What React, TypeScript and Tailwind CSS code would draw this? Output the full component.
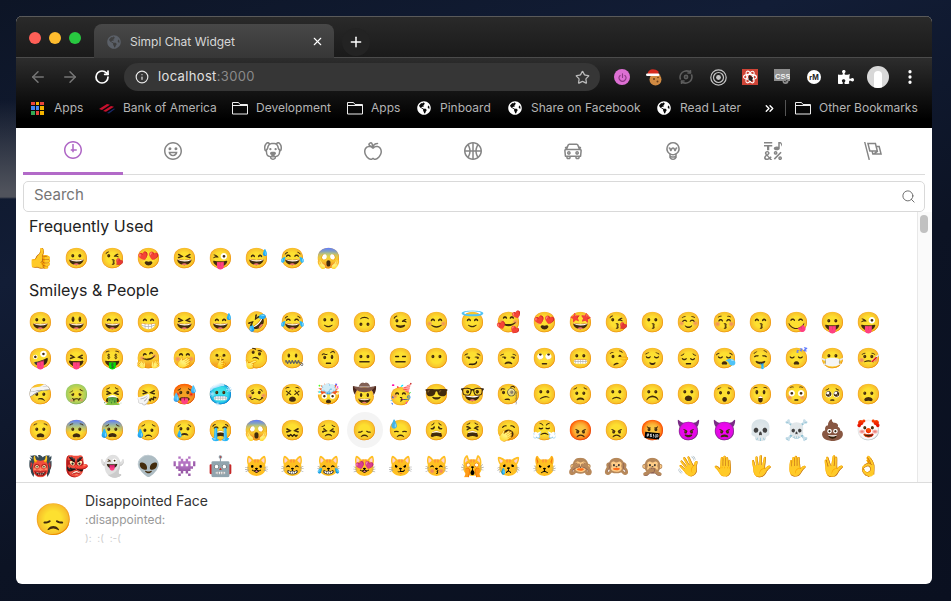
import { ArrowLeft, ArrowRight, Info, Star, Search, X, Plus, RotateCw, EllipsisVertical, ChevronsRight, Power } from "lucide-react";
import { FaGlobeAmericas, FaPuzzlePiece } from "react-icons/fa";

const F = "[font-family:Inter,'Noto_Sans',sans-serif]";

const face = "M12 0C5.373 0 0 5.373 0 12s5.373 12 12 12 12-5.373 12-12S18.627 0 12 0m0 22C6.486 22 2 17.514 2 12S6.486 2 12 2s10 4.486 10 10-4.486 10-10 10";
const tabIcons: string[] = [
  "M13 4h-2l-.001 7H9v2h2v2h2v-2h4v-2h-4z " + face,
  face + " M8 7a2 2 0 1 0-.001 3.999A2 2 0 0 0 8 7M16 7a2 2 0 1 0-.001 3.999A2 2 0 0 0 16 7M15.232 15c-.693 1.195-1.87 2-3.349 2-1.477 0-2.655-.805-3.347-2H15m3-2H6a6 6 0 1 0 12 0",
  "M15.5 8a1.5 1.5 0 1 0 .001 3.001A1.5 1.5 0 0 0 15.5 8M8.5 8a1.5 1.5 0 1 0 .001 3.001A1.5 1.5 0 0 0 8.5 8 M18.933 0h-.027c-.97 0-2.138.787-3.018 1.497-1.274-.374-2.612-.51-3.887-.51-1.285 0-2.616.133-3.874.517C7.245.79 6.069 0 5.093 0h-.027C3.352 0 .07 2.67.002 7.026c-.039 2.479.276 4.238 1.04 5.013.254.258.882.677 1.295.882.191 3.177.922 5.238 2.536 6.38.897.637 2.187.949 3.2 1.102C8.04 20.6 8 20.795 8 21c0 1.773 2.35 3 4 3 1.648 0 4-1.227 4-3 0-.201-.038-.393-.072-.586 2.573-.385 5.435-1.877 5.925-7.587.396-.22.887-.568 1.104-.788.763-.774 1.079-2.534 1.04-5.013C23.929 2.67 20.646 0 18.933 0M3.223 9.135c-.237.281-.837 1.155-.884 1.238-.15-.41-.368-1.349-.337-3.291.051-3.281 2.478-4.972 3.091-5.031.256.015.731.27 1.265.646-1.11 1.171-2.275 2.915-2.352 5.125-.133.546-.398.858-.783 1.313M12 22c-.901 0-1.954-.693-2-1 0-.654.475-1.236 1-1.602V20a1 1 0 1 0 2 0v-.602c.524.365 1 .947 1 1.602-.046.307-1.099 1-2 1m3-3.48v.02a4.752 4.752 0 0 0-1.262-1.02c1.092-.516 2.239-1.334 2.239-2.217 0-1.842-1.781-2.195-3.977-2.195-2.196 0-3.978.354-3.978 2.195 0 .883 1.148 1.701 2.238 2.217A4.8 4.8 0 0 0 9 18.539v-.025c-1-.076-2.182-.281-2.973-.842-1.301-.92-1.838-3.045-1.853-6.478l.023-.041c.496-.826 1.49-1.45 1.804-3.102 0-2.047 1.357-3.631 2.362-4.522C9.37 3.178 10.555 3 11.948 3c1.447 0 2.685.192 3.733.57 1 .9 2.316 2.465 2.316 4.48.313 1.651 1.307 2.275 1.803 3.102.035.058.068.117.102.178-.059 5.967-1.949 7.01-4.902 7.19m6.628-8.202c-.037-.065-.074-.13-.113-.195a7.587 7.587 0 0 0-.739-.987c-.385-.455-.648-.768-.782-1.313-.076-2.209-1.241-3.954-2.353-5.124.531-.376 1.004-.63 1.261-.647.636.071 3.044 1.764 3.096 5.031.027 1.81-.347 3.218-.37 3.235",
  "M17 4.978c-1.838 0-2.876.396-3.68.934.513-1.172 1.768-2.934 4.68-2.934a1 1 0 0 0 0-2c-2.921 0-4.629 1.365-5.547 2.512-.064.078-.119.162-.18.244C11.73 1.838 10.798.023 9.207.023 8.579.022 7.85.306 7 .978 5.027 2.54 5.329 3.902 6.492 4.999 3.609 5.222 0 7.352 0 12.969c0 4.582 4.961 11.009 9 11.009 1.975 0 2.371-.486 3-1 .629.514 1.025 1 3 1 4.039 0 9-6.418 9-11 0-5.953-4.055-8-7-8M8.242 2.546c.641-.508.943-.523.965-.523.426.169.975 1.405 1.357 3.055-1.527-.629-2.741-1.352-2.98-1.846.059-.112.241-.356.658-.686M15 21.978c-1.08 0-1.21-.109-1.559-.402l-.176-.146c-.367-.302-.816-.452-1.266-.452s-.898.15-1.266.452l-.176.146c-.347.292-.477.402-1.557.402-2.813 0-7-5.389-7-9.009 0-5.823 4.488-5.991 5-5.991 1.939 0 2.484.471 3.387 1.251l.323.276a1.995 1.995 0 0 0 2.58 0l.323-.276c.902-.78 1.447-1.251 3.387-1.251.512 0 5 .168 5 6 0 3.617-4.187 9-7 9",
  "M12 0C5.373 0 0 5.372 0 12c0 6.627 5.373 12 12 12 6.628 0 12-5.373 12-12 0-6.628-5.372-12-12-12m9.949 11H17.05c.224-2.527 1.232-4.773 1.968-6.113A9.966 9.966 0 0 1 21.949 11M13 11V2.051a9.945 9.945 0 0 1 4.432 1.564c-.858 1.491-2.156 4.22-2.392 7.385H13zm-2 0H8.961c-.238-3.165-1.536-5.894-2.393-7.385A9.95 9.95 0 0 1 11 2.051V11zm0 2v8.949a9.937 9.937 0 0 1-4.432-1.564c.857-1.492 2.155-4.221 2.393-7.385H11zm4.04 0c.236 3.164 1.534 5.893 2.392 7.385A9.92 9.92 0 0 1 13 21.949V13h2.04zM4.982 4.887C5.718 6.227 6.726 8.473 6.951 11h-4.9a9.977 9.977 0 0 1 2.931-6.113M2.051 13h4.9c-.226 2.527-1.233 4.771-1.969 6.113A9.972 9.972 0 0 1 2.051 13m16.967 6.113c-.735-1.342-1.744-3.586-1.968-6.113h4.899a9.961 9.961 0 0 1-2.931 6.113",
  "M6.5 12C5.122 12 4 13.121 4 14.5S5.122 17 6.5 17 9 15.879 9 14.5 7.878 12 6.5 12m0 3c-.275 0-.5-.225-.5-.5s.225-.5.5-.5.5.225.5.5-.225.5-.5.5M17.5 12c-1.378 0-2.5 1.121-2.5 2.5s1.122 2.5 2.5 2.5 2.5-1.121 2.5-2.5-1.122-2.5-2.5-2.5m0 3c-.275 0-.5-.225-.5-.5s.225-.5.5-.5.5.225.5.5-.225.5-.5.5 M22.482 9.494l-1.039-.346L21.4 9h.6c.552 0 1-.439 1-.992 0-.006-.003-.008-.003-.008H23c0-1-.889-2-1.984-2h-.642l-.731-1.717C19.262 3.012 18.091 2 16.764 2H7.236C5.909 2 4.738 3.012 4.357 4.283L3.626 6h-.642C1.889 6 1 7 1 8h.003S1 8.002 1 8.008C1 8.561 1.448 9 2 9h.6l-.043.148-1.039.346a2.001 2.001 0 0 0-1.359 2.097l.751 7.508a1 1 0 0 0 .994.901H3v1c0 1.103.896 2 2 2h2c1.104 0 2-.897 2-2v-1h6v1c0 1.103.896 2 2 2h2c1.104 0 2-.897 2-2v-1h1.096a.999.999 0 0 0 .994-.901l.751-7.508a2.001 2.001 0 0 0-1.359-2.097M6.273 4.857C6.402 4.43 6.788 4 7.236 4h9.527c.448 0 .834.43.963.857L19.313 9H4.688l1.585-4.143zM7 21H5v-1h2v1zm12 0h-2v-1h2v1zm2.189-3H2.811l-.662-6.607L3 11h18l.852.393L21.189 18z",
  "M12 0a9 9 0 0 0-5 16.482V21s2.035 3 5 3 5-3 5-3v-4.518A9 9 0 0 0 12 0zm0 2c3.86 0 7 3.141 7 7s-3.14 7-7 7-7-3.141-7-7 3.14-7 7-7zM9 17.477c.94.332 1.946.523 3 .523s2.06-.19 3-.523v.834c-.91.436-1.925.689-3 .689a6.924 6.924 0 0 1-3-.69v-.833zm.236 3.07A8.854 8.854 0 0 0 12 21c.965 0 1.888-.167 2.758-.451C14.155 21.173 13.153 22 12 22c-1.102 0-2.117-.789-2.764-1.453z M14.745 12.449h-.004c-.852-.024-1.188-.858-1.577-1.824-.421-1.061-.703-1.561-1.182-1.566h-.009c-.481 0-.783.497-1.235 1.537-.436.982-.801 1.811-1.636 1.791l-.276-.043c-.565-.171-.853-.691-1.284-1.794-.125-.313-.202-.632-.27-.913-.051-.213-.127-.53-.195-.634C7.067 9.004 7.039 9 6.99 9A1 1 0 0 1 7 7h.01c1.662.017 2.015 1.373 2.198 2.134.486-.981 1.304-2.058 2.797-2.075 1.531.018 2.28 1.153 2.731 2.141l.002-.008C14.944 8.424 15.327 7 16.979 7h.032A1 1 0 1 1 17 9h-.011c-.149.076-.256.474-.319.709a6.484 6.484 0 0 1-.311.951c-.429.973-.79 1.789-1.614 1.789",
  "M0 0h11v2H0zM4 11h3V6h4V4H0v2h4zM15.5 17c1.381 0 2.5-1.116 2.5-2.493s-1.119-2.493-2.5-2.493S13 13.13 13 14.507 14.119 17 15.5 17m0-2.986c.276 0 .5.222.5.493 0 .272-.224.493-.5.493s-.5-.221-.5-.493.224-.493.5-.493M21.5 19.014c-1.381 0-2.5 1.116-2.5 2.493S20.119 24 21.5 24s2.5-1.116 2.5-2.493-1.119-2.493-2.5-2.493m0 2.986a.497.497 0 0 1-.5-.493c0-.271.224-.493.5-.493s.5.222.5.493a.497.497 0 0 1-.5.493M22 13l-9 9 1.513 1.5 8.99-9.009zM17 11c2.209 0 4-1.119 4-2.5V2s.985-.161 1.498.949C23.01 4.055 23 6 23 6s1-1.119 1-3.135C24-.02 21 0 21 0h-2v6.347A5.853 5.853 0 0 0 17 6c-2.209 0-4 1.119-4 2.5s1.791 2.5 4 2.5M10.297 20.482l-1.475-1.585a47.54 47.54 0 0 1-1.442 1.129c-.307-.288-.989-1.016-2.045-2.183.902-.836 1.479-1.466 1.729-1.892s.376-.871.376-1.336c0-.592-.273-1.178-.818-1.759-.546-.581-1.329-.871-2.349-.871-1.008 0-1.79.293-2.344.879-.556.587-.832 1.181-.832 1.784 0 .813.419 1.748 1.256 2.805-.847.614-1.444 1.208-1.794 1.784a3.465 3.465 0 0 0-.523 1.833c0 .857.308 1.56.924 2.107.616.549 1.423.823 2.42.823 1.173 0 2.444-.379 3.813-1.137L8.235 24h2.819l-2.09-2.383 1.333-1.135zm-6.736-6.389a1.02 1.02 0 0 1 .73-.286c.31 0 .559.085.747.254a.849.849 0 0 1 .283.659c0 .518-.419 1.112-1.257 1.784-.536-.651-.805-1.231-.805-1.742a.901.901 0 0 1 .302-.669M3.74 22c-.427 0-.778-.116-1.057-.349-.279-.232-.418-.487-.418-.766 0-.594.509-1.288 1.527-2.083.968 1.134 1.717 1.946 2.248 2.438-.921.507-1.686.76-2.3.76",
  "M0 0l6.084 24L8 23.518 1.916 0zM21 5h-4l-1-4H4l3 12h3l1 4h13L21 5zM6.563 3h7.875l2 8H8.563l-2-8zm8.832 10l-2.856 1.904L12.063 13h3.332zM19 13l-1.5-6h1.938l2 8H16l3-2z",
];

const frequent = ["👍","😀","😘","😍","😆","😜","😅","😂","😱"];
const rows = [
  ["😀","😃","😄","😁","😆","😅","🤣","😂","🙂","🙃","😉","😊","😇","🥰","😍","🤩","😘","😗","☺️","😚","😙","😋","😛","😜"],
  ["🤪","😝","🤑","🤗","🤭","🤫","🤔","🤐","🤨","😐","😑","😶","😏","😒","🙄","😬","🤥","😌","😔","😪","🤤","😴","😷","🤒"],
  ["🤕","🤢","🤮","🤧","🥵","🥶","🥴","😵","🤯","🤠","🥳","😎","🤓","🧐","😕","😟","🙁","☹️","😮","😯","😲","😳","🥺","😦"],
  ["😧","😨","😰","😥","😢","😭","😱","😖","😣","😞","😓","😩","😫","🥱","😤","😡","😠","🤬","😈","👿","💀","☠️","💩","🤡"],
  ["👹","👺","👻","👽","👾","🤖","😺","😸","😹","😻","😼","😽","🙀","😿","😾","🙈","🙉","🙊","👋","🤚","🖐️","✋","🖖","👌"],
];
const EF = "[font-family:'Noto_Color_Emoji',sans-serif]";

function Cell({ e, active }: { e: string; active?: boolean }) {
  return (
    <span className={`flex h-9 w-9 items-center justify-center rounded-full text-[20px] leading-none ${EF} ${active ? "bg-[#f4f4f4]" : ""}`}>{e}</span>
  );
}

function Bookmark({ icon, label, className }: { icon: React.ReactNode; label: string; className: string }) {
  return (
    <div className={`flex items-center ${className}`}>
      {icon}
      <span className="whitespace-nowrap text-xs text-[#b4b4b4]">{label}</span>
    </div>
  );
}
const Globe = () => <FaGlobeAmericas className="h-[14px] w-[14px] text-white" />;
const Folder = () => (
  <svg width="16" height="14" viewBox="0 0 16 14" fill="none" stroke="#eee" strokeWidth="1">
    <path d="M.5 1.5h6l1.5 2h7.5v9.5H.5z" />
    <path d="M.5 4.5h15" />
  </svg>
);

function AppsGrid() {
  const c = ["#e8453c","#f4b400","#e8453c","#4285f4","#4285f4","#f4b400","#34a853","#e8453c","#f4b400"];
  return (
    <div className="grid h-[13px] w-[13px] grid-cols-3 gap-[1px]">
      {c.map((x, i) => <span key={i} className="block" style={{ background: x }} />)}
    </div>
  );
}

function Ext({ children }: { children: React.ReactNode }) {
  return <div className="flex h-8 w-8 items-center justify-center">{children}</div>;
}

export default function App() {
  return (
    <div className={`h-[601px] w-[951px] overflow-hidden bg-[linear-gradient(to_bottom,transparent_100px,#50535c_192px,#50535c_197px,transparent_199px),linear-gradient(160deg,#0d1526_0%,#121d36_30%,#0c1324_60%,#0a1020_100%)] bg-no-repeat [background-size:16px_100%,100%_100%] p-4 pr-[19px] ${F}`}>
      <div className="flex h-[568px] w-[916px] flex-col overflow-hidden rounded-[6px] bg-white">
        {/* tab strip */}
        <div className="flex h-[42px] shrink-0 items-end border-b border-[#4b4b4b] bg-[linear-gradient(#2a2a2a,#1a1a1a)] pl-[13px] shadow-[inset_0_1px_0_#5a5a5a]">
          <div className="flex h-full items-center gap-2 pr-[13px] pt-[2px]">
            <span className="h-3 w-3 rounded-full bg-[#ff5f57]" />
            <span className="h-3 w-3 rounded-full bg-[#febc2e]" />
            <span className="h-3 w-3 rounded-full bg-[#28c840]" />
          </div>
          <div className="mb-[-1px] flex h-[34px] w-[240px] items-center rounded-t-[8px] bg-[linear-gradient(#484848,#373737)] pl-[13px] pr-[10px] pt-[1px]">
            <FaGlobeAmericas className="h-[14px] w-[14px] text-[#5b6068]" />
            <span className="ml-[9px] flex-1 text-xs text-[#d6d6d6]">Simpl Chat Widget</span>
            <X className="h-[13px] w-[13px] text-white" strokeWidth={2} />
          </div>
          <div className="mb-[1px] ml-2 flex h-7 w-7 items-center justify-center rounded-full bg-[#232323]">
            <Plus className="h-4 w-4 text-white" strokeWidth={2.2} />
          </div>
        </div>
        {/* toolbar */}
        <div className="bg-[linear-gradient(#2d2d2d,#000_88%)]">
          <div className="flex h-[38px] items-center pl-[13px]">
            <ArrowLeft className="h-[18px] w-[18px] text-[#767676]" />
            <ArrowRight className="ml-[14px] h-[18px] w-[18px] text-[#767676]" />
            <RotateCw className="ml-[15px] h-4 w-4 text-white" strokeWidth={2.6} />
            <div className="ml-[14px] flex h-[28px] w-[476px] items-center rounded-full bg-[#363636] pl-[11px] pr-[10px]">
              <Info className="h-[14px] w-[14px] text-[#e8e8e8]" strokeWidth={2} />
              <span className="ml-[9px] flex-1 text-[13px] tracking-[0.35px] text-[#e0e0e0]">localhost<span className="text-[#8a8a8a]">:3000</span></span>
              <Star className="h-[15px] w-[15px] text-[#bbb]" strokeWidth={2} />
            </div>
            <div className="ml-[6px] flex items-center">
              <Ext><span className="flex h-4 w-4 items-center justify-center rounded-full bg-[#dd6fd3]"><Power className="h-[9px] w-[9px] text-[#8d3a86]" strokeWidth={3} /></span></Ext>
              <Ext>
                <svg width="18" height="18" viewBox="0 0 18 18"><circle cx="10.5" cy="11.5" r="6" fill="#d08a42"/><circle cx="9" cy="11" r="1" fill="#6a3e1a"/><circle cx="12.5" cy="13.5" r="1" fill="#6a3e1a"/><circle cx="13" cy="9.5" r=".8" fill="#6a3e1a"/><path d="M2.5 6C3 1 9 -.5 13.5 3.5V6z" fill="#d62c20"/><rect x="1" y="5.5" width="13.5" height="2.6" rx="1.3" fill="#fff"/></svg>
              </Ext>
              <Ext>
                <svg width="16" height="16" viewBox="0 0 16 16" fill="none" stroke="#5d5d5d" strokeWidth="1.6"><path d="M13 3.6A6.6 6.6 0 0 0 2 8c0 1 .2 1.8.6 2.6M3 12.4A6.6 6.6 0 0 0 14 8c0-1-.2-1.8-.6-2.6"/><circle cx="8" cy="8" r="1.6"/><path d="M12.4 1v3h-3M3.6 15v-3h3"/></svg>
              </Ext>
              <Ext>
                <svg width="17" height="17" viewBox="0 0 17 17" fill="none" stroke="#c4c4c4"><circle cx="8.5" cy="8.5" r="7.7" strokeWidth="1.2"/><circle cx="8.5" cy="8.5" r="5" strokeWidth="1.2"/><circle cx="8.5" cy="8.5" r="2.4" fill="#c4c4c4" stroke="none"/></svg>
              </Ext>
              <Ext>
                <svg width="16" height="16" viewBox="0 0 16 16"><rect width="16" height="16" fill="#cf4436"/><g fill="none" stroke="#fff" strokeWidth="1.1"><ellipse cx="8" cy="8" rx="6.5" ry="2.6"/><ellipse cx="8" cy="8" rx="6.5" ry="2.6" transform="rotate(60 8 8)"/><ellipse cx="8" cy="8" rx="6.5" ry="2.6" transform="rotate(120 8 8)"/></g><path d="M7 6l4 2.5-1 4-3.5-1.5z" fill="#2a2020"/></svg>
              </Ext>
              <Ext>
                <svg width="16" height="16" viewBox="0 0 16 16"><rect width="16" height="12" fill="#8f8f8f"/><text x="1" y="9.5" fontSize="7.5" fontWeight="700" fill="#f2f2f2" fontFamily="Liberation Sans">CSS</text><circle cx="11.5" cy="12" r="3" fill="#8f8f8f"/><path d="M10 12l1.2 1.2 2-2.2" fill="none" stroke="#333" strokeWidth="1"/></svg>
              </Ext>
              <Ext>
                <span className="flex h-[14px] w-[14px] items-center justify-center rounded-full bg-white text-[7px] font-bold leading-none text-[#222]">rM</span>
              </Ext>
              <Ext><FaPuzzlePiece className="h-4 w-4 text-white" /></Ext>
              <Ext>
                <span className="flex h-[22px] w-[22px] items-end justify-center overflow-hidden rounded-full bg-[#d8d8d8]"><span className="h-[17px] w-2 rounded-t-full bg-white" /></span>
              </Ext>
              <Ext><EllipsisVertical className="h-[18px] w-[18px] text-white" strokeWidth={2.4} /></Ext>
            </div>
          </div>
          {/* bookmarks */}
          <div className="flex h-[32px] items-center pb-[8px] pl-[15px]">
            <Bookmark className="w-[68px] gap-[10px]" icon={<AppsGrid />} label="Apps" />
            <Bookmark className="w-[133px] gap-2" icon={
              <svg width="16" height="11" viewBox="0 0 16 11"><path d="M0 6 8 1l3 .8L3 7zM4 8l8-5 3 .8-8 5z" fill="#c8102e"/><path d="M8 10l7-4.4L16 6l-6 4.6z" fill="#1b2a6b"/></svg>
            } label="Bank of America" />
            <Bookmark className="w-[115px] gap-2" icon={<Folder />} label="Development" />
            <Bookmark className="w-[70px] gap-2" icon={<Folder />} label="Apps" />
            <Bookmark className="w-[91px] gap-[9px]" icon={<Globe />} label="Pinboard" />
            <Bookmark className="w-[149px] gap-[9px]" icon={<Globe />} label="Share on Facebook" />
            <Bookmark className="w-[106px] gap-[9px]" icon={<Globe />} label="Read Later" />
            <ChevronsRight className="h-[13px] w-[13px] text-white" strokeWidth={2.6} />
            <div className="ml-[9px] mr-[9px] h-[16px] w-px bg-[#555]" />
            <Bookmark className="gap-2" icon={<Folder />} label="Other Bookmarks" />
          </div>
        </div>
        {/* widget */}
        <div className="flex min-h-0 flex-1 flex-col">
          <div className="mx-[7px] flex h-[47px] shrink-0 border-b border-[#dcdcdc] pr-[2px]">
            {tabIcons.map((d, i) => (
              <div key={i} className={`flex w-[100px] items-center justify-center ${i === 0 ? "mb-[-1px] border-b-[3px] border-[#b26ac8] text-[#ae65c5]" : "text-[#858585]"}`}>
                <svg viewBox="0 0 24 24" className="h-[18px] w-[18px]" fill="currentColor"><path d={d} /></svg>
              </div>
            ))}
          </div>
          <div className="mx-[7px] mt-[6px] flex h-[31px] shrink-0 items-center rounded-[5px] border border-[#d9d9d9] pl-[10px] pr-[8px]">
            <span className="flex-1 pb-[2px] text-[15px] text-[#757575]">Search</span>
            <Search className="h-[15px] w-[15px] text-[#666]" strokeWidth={1.5} />
          </div>
          <div className="flex min-h-0 flex-1">
            <div className="min-w-0 flex-1 overflow-hidden pl-[7px]">
              <h2 className="mt-[2px] pl-[6px] text-base font-normal leading-[24px] text-[#222]">Frequently Used</h2>
              <div className="mt-[2px] flex">{frequent.map((e, i) => <Cell key={i} e={e} />)}</div>
              <h2 className="mt-[2px] pl-[6px] text-base font-normal leading-[24px] text-[#222]">Smileys &amp; People</h2>
              <div className="mt-[2px] flex flex-col">
                {rows.map((r, i) => (
                  <div key={i} className="flex">{r.map((e, j) => <Cell key={j} e={e} active={i === 3 && j === 9} />)}</div>
                ))}
              </div>
            </div>
            <div className="w-[15px] shrink-0 border-l border-[#e8e8e8] bg-[#fafafa] pl-[2px] pt-[3px]">
              <div className="h-[18px] w-2 rounded-full bg-[#c1c1c1]" />
            </div>
          </div>
          <div className="flex h-[102px] shrink-0 border-t border-[#dcdcdc] pl-5 pt-2">
            <span className={`mt-[8px] flex h-[40px] w-[36px] items-center justify-center text-[31px] leading-none ${EF}`}>😞</span>
            <div className="ml-[13px] flex flex-col">
              <span className="text-sm leading-[20px] text-[#333]">Disappointed Face</span>
              <span className="mt-[-1px] text-xs leading-[20px] text-[#999]">:disappointed:</span>
              <span className="text-[10px] leading-[16px] text-[#ccc] [word-spacing:3px]">): :( :-(</span>
            </div>
          </div>
        </div>
      </div>
    </div>
  );
}
